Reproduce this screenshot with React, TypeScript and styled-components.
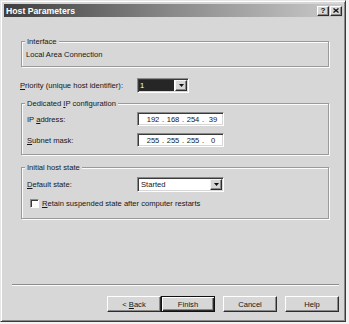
import React from "react";
import styled, { createGlobalStyle } from "styled-components";

const GlobalStyle = createGlobalStyle`
  html, body {
    margin: 0;
    padding: 0;
    background: #f2f2f2;
  }
  body {
    font-family: "Liberation Sans", Arial, sans-serif;
  }
`;

const FACE = "#d7d7d7";

const Window = styled.div`
  width: 346px;
  height: 322px;
  box-sizing: border-box;
  background: ${FACE};
  border: 1px solid;
  border-color: #e6e6e6 #3a3a3a #3a3a3a #e6e6e6;
  box-shadow: inset 1px 1px #ffffff, inset -1px -1px #8a8a8a;
  display: flex;
  flex-direction: column;
  font-size: 7.6px;
  color: #161616;
`;

const TitleBar = styled.div`
  height: 13px;
  margin: 3px 2px 0 3px;
  padding-left: 2px;
  display: flex;
  align-items: center;
  background: linear-gradient(to right, #3e3e3e, #8a8a8a 50%, #cbcbcb);
`;

const Title = styled.span`
  color: #ffffff;
  font-weight: bold;
  font-size: 8.7px;
`;

const CaptionButtons = styled.div`
  margin-left: auto;
  margin-right: 1px;
  display: flex;
  gap: 1px;
`;

const CaptionButton = styled.div`
  width: 12px;
  height: 10px;
  box-sizing: border-box;
  background: ${FACE};
  border: 1px solid;
  border-color: #ffffff #2c2c2c #2c2c2c #ffffff;
  box-shadow: inset -1px -1px #8a8a8a;
  display: flex;
  align-items: center;
  justify-content: center;
  font-weight: bold;
  font-size: 8px;
  line-height: 8px;
  color: #111;
`;

const Body = styled.div`
  padding: 0 16px 0 20px;
  display: flex;
  flex-direction: column;
`;

const GroupBox = styled.div<{ $top: number; $pad: string }>`
  position: relative;
  margin-top: ${(p) => p.$top}px;
  border: 1px solid #9a9a9a;
  box-shadow: inset 1px 1px #fbfbfb, 1px 1px #fbfbfb;
  padding: ${(p) => p.$pad};
  display: flex;
  flex-direction: column;
`;

const Legend = styled.span`
  position: absolute;
  top: -5px;
  left: 3px;
  padding: 0 2px;
  line-height: 10px;
  background: ${FACE};
`;

const Row = styled.div<{ $h: number; $top?: number }>`
  height: ${(p) => p.$h}px;
  margin-top: ${(p) => p.$top ?? 0}px;
  display: flex;
  align-items: center;
`;

const Label = styled.span<{ $width: number }>`
  width: ${(p) => p.$width}px;
  flex: none;
`;

const U = styled.span`
  text-decoration: underline;
`;

const Field = styled.div<{ $width: number; $height: number }>`
  width: ${(p) => p.$width}px;
  height: ${(p) => p.$height}px;
  box-sizing: border-box;
  background: #ffffff;
  border: 1px solid;
  border-color: #8a8a8a #ffffff #ffffff #8a8a8a;
  box-shadow: inset 1px 1px #3a3a3a, inset -1px -1px ${FACE};
  display: flex;
  align-items: center;
  padding: 1px;
`;

const IpInner = styled.div`
  display: flex;
  padding-left: 6px;
`;

const Octet = styled.span`
  width: 16px;
  text-align: center;
`;

const Dot = styled.span`
  width: 4px;
  text-align: center;
`;

const Selection = styled.span`
  align-self: stretch;
  flex: 1;
  margin-right: 1px;
  background: #262626;
  color: #ffffff;
  padding-left: 1px;
  display: flex;
  align-items: center;
`;

const ComboText = styled.span`
  flex: 1;
  padding-left: 2px;
`;

const ArrowButton = styled.div`
  align-self: stretch;
  width: 12px;
  box-sizing: border-box;
  background: ${FACE};
  border: 1px solid;
  border-color: #f4f4f4 #2c2c2c #2c2c2c #f4f4f4;
  box-shadow: inset -1px -1px #8a8a8a;
  display: flex;
  align-items: center;
  justify-content: center;
`;

const CheckBox = styled.div`
  width: 9px;
  height: 9px;
  box-sizing: border-box;
  margin: 0 3px 0 3px;
  background: #ffffff;
  border: 1px solid;
  border-color: #8a8a8a #ffffff #ffffff #8a8a8a;
  box-shadow: inset 1px 1px #3a3a3a;
`;

const Footer = styled.div`
  margin-top: auto;
  padding: 0 6px 9px 11px;
  display: flex;
  flex-direction: column;
`;

const Separator = styled.div`
  border-top: 1px solid #8c8c8c;
  border-bottom: 1px solid #fbfbfb;
`;

const ButtonRow = styled.div`
  margin-top: 10px;
  display: flex;
  justify-content: flex-end;
`;

const Button = styled.div<{ $default?: boolean; $gap?: number }>`
  width: 54px;
  height: 16px;
  box-sizing: border-box;
  margin-left: ${(p) => p.$gap ?? 0}px;
  background: ${FACE};
  border: 1px solid;
  border-color: ${(p) =>
    p.$default ? "#111111" : "#ffffff #2c2c2c #2c2c2c #ffffff"};
  box-shadow: ${(p) =>
    p.$default
      ? "inset 1px 1px #ffffff, inset -1px -1px #2c2c2c, inset -2px -2px #8a8a8a"
      : "inset -1px -1px #8a8a8a"};
  display: flex;
  align-items: center;
  justify-content: center;
`;

const Arrow = () => (
  <svg width="5" height="3" viewBox="0 0 5 3">
    <polygon points="0,0 5,0 2.5,3" fill="#111" />
  </svg>
);

const IpField = ({ parts }: { parts: string[] }) => (
  <Field $width={87} $height={14}>
    <IpInner>
      {parts.map((part, i) => (
        <React.Fragment key={i}>
          {i > 0 && <Dot>.</Dot>}
          <Octet>{part}</Octet>
        </React.Fragment>
      ))}
    </IpInner>
  </Field>
);

export default function App() {
  return (
    <>
      <GlobalStyle />
      <Window>
        <TitleBar>
          <Title>Host Parameters</Title>
          <CaptionButtons>
            <CaptionButton>?</CaptionButton>
            <CaptionButton>
              <svg width="6" height="5" viewBox="0 0 6 5">
                <path d="M0.5 0.5 L5.5 4.5 M5.5 0.5 L0.5 4.5" stroke="#111" strokeWidth="1.3" />
              </svg>
            </CaptionButton>
          </CaptionButtons>
        </TitleBar>

        <Body>
          <GroupBox $top={24} $pad="6px 4px">
            <Legend>Interface</Legend>
            <Row $h={12}>Local Area Connection</Row>
          </GroupBox>

          <Row $h={15} $top={11} style={{ marginLeft: -1 }}>
            <Label $width={117}>
              <U>P</U>riority (unique host identifier):
            </Label>
            <Field $width={52} $height={15}>
              <Selection>1</Selection>
              <ArrowButton>
                <Arrow />
              </ArrowButton>
            </Field>
          </Row>

          <GroupBox $top={10} $pad="8px 5px 7px">
            <Legend>
              Dedicated <U>I</U>P configuration
            </Legend>
            <Row $h={14}>
              <Label $width={110}>
                IP <U>a</U>ddress:
              </Label>
              <IpField parts={["192", "168", "254", "39"]} />
            </Row>
            <Row $h={14} $top={7}>
              <Label $width={110}>
                <U>S</U>ubnet mask:
              </Label>
              <IpField parts={["255", "255", "255", "0"]} />
            </Row>
          </GroupBox>

          <GroupBox $top={12} $pad="9px 5px 8px">
            <Legend>Initial host state</Legend>
            <Row $h={15}>
              <Label $width={110}>
                <U>D</U>efault state:
              </Label>
              <Field $width={87} $height={15}>
                <ComboText>Started</ComboText>
                <ArrowButton>
                  <Arrow />
                </ArrowButton>
              </Field>
            </Row>
            <Row $h={14} $top={4}>
              <CheckBox />
              <span>
                <U>R</U>etain suspended state after computer restarts
              </span>
            </Row>
          </GroupBox>
        </Body>

        <Footer>
          <Separator />
          <ButtonRow>
            <Button>
              &lt;&nbsp;<U>B</U>ack
            </Button>
            <Button $default>Finish</Button>
            <Button $gap={8}>Cancel</Button>
            <Button $gap={8}>Help</Button>
          </ButtonRow>
        </Footer>
      </Window>
    </>
  );
}
